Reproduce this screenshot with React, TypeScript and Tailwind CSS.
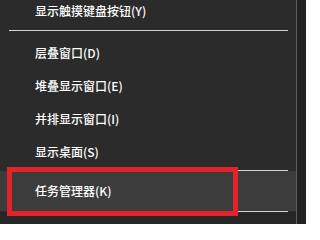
import React from "react";

const font = { fontFamily: '"Noto Sans CJK SC", "Noto Sans", sans-serif' };

function Row({ label, h }: { label: string; h: string }) {
  return (
    <div className={`${h} flex items-center pl-[35px] text-[12px] font-medium leading-none text-white`}>
      {label}
    </div>
  );
}

export default function App() {
  return (
    <div className="relative flex h-[224px] w-[306px] overflow-hidden bg-[#222222]" style={font}>
      <div className="flex w-[297px] flex-col border-r border-[#5c5c5c] bg-[#2b2b2b]">
        <Row label="显示触摸键盘按钮(Y)" h="h-[21px]" />
        <div className="flex h-[15px] flex-col pt-[9px]">
          <div className="ml-[9px] mr-[8px] h-px bg-[#d2d2d2]" />
        </div>
        <Row label="层叠窗口(D)" h="h-[33px]" />
        <Row label="堆叠显示窗口(E)" h="h-[33px]" />
        <Row label="并排显示窗口(I)" h="h-[33px]" />
        <Row label="显示桌面(S)" h="h-[33px]" />
        <div className="mt-[2px] flex flex-col">
          <div className="ml-[9px] mr-[8px] h-px bg-[#d2d2d2]" />
          <div className="flex h-[40px] items-center bg-[#3c3c3c] pl-[35px] text-[12px] font-medium leading-none text-white">
            任务管理器(K)
          </div>
          <div className="ml-[9px] mr-[8px] h-px bg-[#d2d2d2]" />
        </div>
        <div className="flex-1 bg-[#262626]" />
      </div>
      <div className="absolute left-[7px] top-[167px] h-[49px] w-[231px] border-[5px] border-[#e3232b]" />
    </div>
  );
}
